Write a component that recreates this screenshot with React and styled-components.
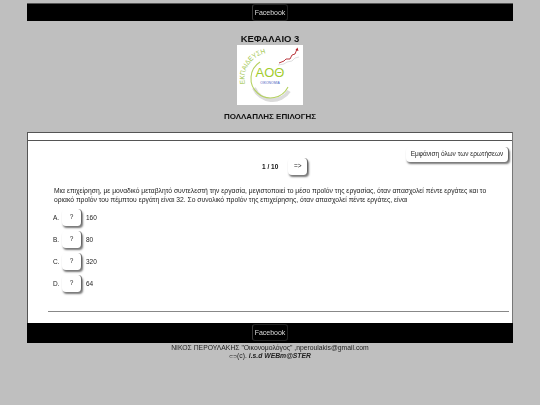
import React from 'react';
import styled, { createGlobalStyle } from 'styled-components';

const GlobalStyle = createGlobalStyle`
  html, body {
    margin: 0;
    padding: 0;
    background: #bfbfbf;
    font-family: "Liberation Sans", Arial, sans-serif;
    color: #222;
  }
`;

const options = [
  { letter: 'A.', value: '160' },
  { letter: 'B.', value: '80' },
  { letter: 'C.', value: '320' },
  { letter: 'D.', value: '64' },
];

function Logo() {
  return (
    <LogoBox>
      <svg width="66" height="60" viewBox="0 0 66 60">
        <rect width="66" height="60" fill="#fff" />
        <path d="M17 43 A20 20 0 0 0 52 46" fill="none" stroke="#dcdcdc" strokeWidth="4" />
        <path d="M23 17 A19.500 19.500 0 1 0 51 42" fill="none" stroke="#b5d160" strokeWidth="1.100" />
        <path id="arcText" d="M8 39 A26 26 0 0 1 36 8" fill="none" />
        <text fontFamily="Liberation Sans" fontSize="7" fill="#a2c64f">
          <textPath href="#arcText" textLength="41" lengthAdjust="spacingAndGlyphs">ΕΚΠΑΙΔΕΥΣΗ</textPath>
        </text>
        <text x="33" y="32" textAnchor="middle" fontFamily="Liberation Sans" fontSize="13" fill="#a3cc2e">
          AOΘ
        </text>
        <text x="33" y="39" textAnchor="middle" fontFamily="Liberation Sans" fontSize="3.400" fill="#4a5cc0">
          ΟΙΚΟΝΟΜΙΑ
        </text>
        <path d="M42 18 L47 16 L49 14 L53 14 L55 10 L58 9 L60 4" fill="none" stroke="#b3222a" strokeWidth="0.900" />
        <path d="M58.500 5 L60.500 2.500 L61.500 6 Z" fill="#b3222a" />
        <path d="M41 20 L47 19 L50 17 L55 16 L58 13 L62 12" fill="none" stroke="#c9c9c9" strokeWidth="0.600" />
      </svg>
    </LogoBox>
  );
}

export default function App() {
  return (
    <Page>
      <GlobalStyle />
      <BlackBar>
        <FacebookLink>Facebook</FacebookLink>
      </BlackBar>
      <Title>ΚΕΦΑΛΑΙΟ 3</Title>
      <Logo />
      <SubTitle>ΠΟΛΛΑΠΛΗΣ ΕΠΙΛΟΓΗΣ</SubTitle>
      <Panel>
        <PanelHead />
        <PanelBody>
          <ShowAllRow>
            <ShadowButton>Εμφάνιση όλων των ερωτήσεων</ShadowButton>
          </ShowAllRow>
          <Pager>
            <PagerCount>1 / 10</PagerCount>
            <ShadowButton $wide>=&gt;</ShadowButton>
          </Pager>
          <Question>
            Μια επιχείρηση, με μοναδικό μεταβλητό συντελεστή την εργασία, μεγιστοποιεί το μέσο προϊόν της
            εργασίας, όταν απασχολεί πέντε εργάτες και το οριακό προϊόν του πέμπτου εργάτη είναι 32. Σο
            συνολικό προϊόν της επιχείρησης, όταν απασχολεί πέντε εργάτες, είναι
          </Question>
          <OptionList>
            {options.map((o) => (
              <Option key={o.letter}>
                <Letter>{o.letter}</Letter>
                <ShadowButton $answer>?</ShadowButton>
                <OptionValue>{o.value}</OptionValue>
              </Option>
            ))}
          </OptionList>
          <Rule />
        </PanelBody>
      </Panel>
      <BlackBar $bottom>
        <FacebookLink>Facebook</FacebookLink>
      </BlackBar>
      <Footer>
        <div>ΝΙΚΟΣ ΠΕΡΟΥΛΑΚΗΣ "Οικονομολόγος" ,nperoulakis@gmail.com</div>
        <div>
          <Mark>⊂⊃</Mark>(c). <b><i>i.s.d WEBm@STER</i></b>
        </div>
      </Footer>
    </Page>
  );
}

const Page = styled.div`
  width: 540px;
  height: 405px;
  padding-top: 3px;
  box-sizing: border-box;
  overflow: hidden;
  display: flex;
  flex-direction: column;
  align-items: center;
  filter: blur(0.3px);
`;

const BlackBar = styled.div`
  width: 486px;
  height: ${(p) => (p.$bottom ? '20px' : '18px')};
  background: #000;
  border-top: 1px solid ${(p) => (p.$bottom ? '#000' : '#555')};
  box-sizing: border-box;
  display: flex;
  justify-content: center;
`;

const FacebookLink = styled.div`
  width: 36px;
  height: 17px;
  box-sizing: border-box;
  border: 1px solid #222;
  border-left-color: #3a3a3a;
  border-radius: 3px;
  color: #ddd;
  font-size: 7px;
  line-height: 15px;
  text-align: center;
`;

const Title = styled.div`
  margin-top: 12px;
  height: 12px;
  font-size: 9.500px;
  line-height: 12px;
  font-weight: bold;
  color: #111;
`;

const LogoBox = styled.div`
  width: 66px;
  height: 60px;
  svg {
    display: block;
  }
`;

const SubTitle = styled.div`
  margin-top: 7px;
  height: 10px;
  font-size: 8px;
  line-height: 10px;
  font-weight: bold;
  color: #111;
`;

const Panel = styled.div`
  margin-top: 10px;
  width: 486px;
  height: 191px;
  box-sizing: border-box;
  background: #fff;
  border: 1px solid #555;
  border-bottom: none;
  border-right-color: #777;
  display: flex;
  flex-direction: column;
`;

const PanelHead = styled.div`
  height: 7px;
  border-bottom: 1px solid #555;
`;

const PanelBody = styled.div`
  flex: 1;
  padding: 6px 3px 0 20px;
  display: flex;
  flex-direction: column;
  font-size: 6.500px;
  color: #222;
`;

const ShowAllRow = styled.div`
  display: flex;
  justify-content: flex-end;
`;

const ShadowButton = styled.div`
  box-sizing: border-box;
  height: ${(p) => (p.$answer || p.$wide ? '17px' : '15px')};
  width: ${(p) => (p.$answer || p.$wide ? '20px' : '103px')};
  line-height: ${(p) => (p.$answer || p.$wide ? '15px' : '13px')};
  background: #fff;
  border-radius: 4px;
  border-right: 1px solid #666;
  box-shadow: 1px 2px 2px #777;
  text-align: center;
  font-size: 6.500px;
  color: #222;
`;

const Pager = styled.div`
  margin-top: -4px;
  margin-left: 214px;
  display: flex;
  align-items: center;
  gap: 10px;
`;

const PagerCount = styled.div`
  font-weight: bold;
  font-size: 6.500px;
  color: #111;
`;

const Question = styled.div`
  margin-top: 11px;
  margin-left: 6px;
  width: 438px;
  line-height: 9px;
  font-size: 6.750px;
`;

const OptionList = styled.div`
  margin-top: 5px;
  margin-left: 5px;
  display: flex;
  flex-direction: column;
  gap: 5px;
`;

const Option = styled.div`
  display: flex;
  align-items: center;
  gap: 1px;
`;

const Letter = styled.span`
  width: 8px;
`;

const OptionValue = styled.span`
  margin-left: 3px;
`;

const Rule = styled.div`
  margin-top: 19px;
  height: 1px;
  background: #888;
`;

const Footer = styled.div`
  margin-top: 1px;
  text-align: center;
  font-size: 6.800px;
  line-height: 8px;
  color: #222;
`;

const Mark = styled.span`
  font-size: 5px;
`;
